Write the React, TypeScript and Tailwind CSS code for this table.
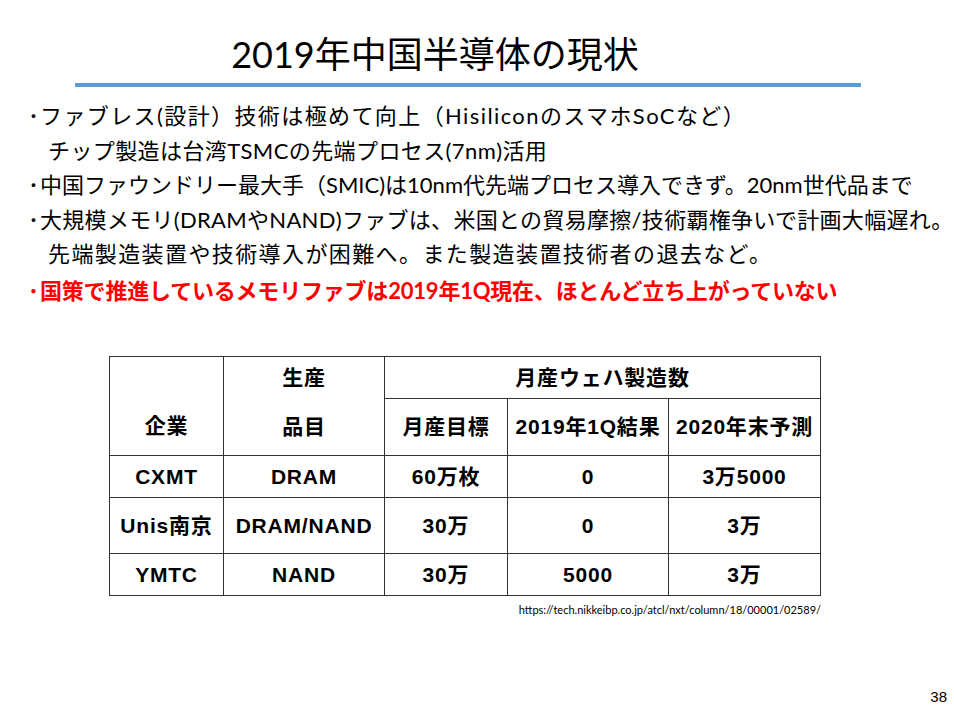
import React from "react";

const bodyFont = { fontFamily: 'Lato, "Noto Sans CJK JP", sans-serif' };
const tableFont = { fontFamily: '"Liberation Sans", "Noto Sans CJK JP", sans-serif' };

function Cell({ children, className = "" }: { children?: React.ReactNode; className?: string }) {
  return (
    <div className={"flex items-center justify-center border-r border-b border-[#333] " + className}>
      {children}
    </div>
  );
}

function Bullet({ children, className = "" }: { children: React.ReactNode; className?: string }) {
  return (
    <div className="flex">
      <span className="w-[12px] shrink-0">･</span>
      <span className={className}>{children}</span>
    </div>
  );
}

export default function App() {
  const rows = [
    ["CXMT", "DRAM", "60万枚", "0", "3万5000", "h-[42px]"],
    ["Unis南京", "DRAM/NAND", "30万", "0", "3万", "h-[56px]"],
    ["YMTC", "NAND", "30万", "5000", "3万", "h-[42px]"],
  ];
  return (
    <div className="w-[954px] h-[714px] bg-white relative overflow-hidden text-black">
      <div className="pt-[31px] flex justify-center">
        <h1 className="text-[36px] leading-[46px] mr-[84px]" style={bodyFont}>
          2019年中国半導体の現状
        </h1>
      </div>
      <div className="ml-[75px] mt-[6px] h-[4px] w-[786px] bg-[#5b9bd5]" />
      <div className="pl-[28px] pt-[12px] text-[22px] leading-[34.5px]" style={bodyFont}>
        <Bullet className="tracking-[1.4px]">ファブレス(設計）技術は極めて向上（HisiliconのスマホSoCなど）</Bullet>
        <div className="pl-[20px] tracking-[0.4px]">チップ製造は台湾TSMCの先端プロセス(7nm)活用</div>
        <Bullet>中国ファウンドリー最大手（SMIC)は10nm代先端プロセス導入できず。20nm世代品まで</Bullet>
        <Bullet className="tracking-[0.3px]">大規模メモリ(DRAMやNAND)ファブは、米国との貿易摩擦/技術覇権争いで計画大幅遅れ。</Bullet>
        <div className="pl-[20px] tracking-[1.4px]">先端製造装置や技術導入が困難へ。また製造装置技術者の退去など。</div>
        <div className="text-[#ff0000] font-bold mt-[2px]">
          <Bullet className="tracking-[-0.2px]">国策で推進しているメモリファブは2019年1Q現在、ほとんど立ち上がっていない</Bullet>
        </div>
      </div>
      <div className="ml-[109px] mt-[48px] w-[712px]">
        <div className="border-l border-t border-[#333] text-[21px] font-bold tracking-[0.8px]" style={tableFont}>
          <div className="grid grid-cols-[114px_161px_123px_161px_152px]">
            <Cell className="row-span-2 pt-[40px]">企業</Cell>
            <div className="row-span-2 flex flex-col items-center border-r border-b border-[#333]">
              <div className="h-[42px] flex items-center">生産</div>
              <div className="h-[56px] flex items-center">品目</div>
            </div>
            <Cell className="col-span-3 h-[42px]">月産ウェハ製造数</Cell>
            <Cell className="h-[57px]">月産目標</Cell>
            <Cell className="h-[57px]">2019年1Q結果</Cell>
            <Cell className="h-[57px]">2020年末予測</Cell>
            {rows.map((r) => (
              <React.Fragment key={r[0]}>
                <Cell className={r[5]}>{r[0]}</Cell>
                <Cell className={r[5]}>{r[1]}</Cell>
                <Cell className={r[5]}>{r[2]}</Cell>
                <Cell className={r[5]}>{r[3]}</Cell>
                <Cell className={r[5]}>{r[4]}</Cell>
              </React.Fragment>
            ))}
          </div>
        </div>
        <div className="text-right text-[11px] mt-[6px]" style={bodyFont}>
          https://tech.nikkeibp.co.jp/atcl/nxt/column/18/00001/02589/
        </div>
      </div>
      <div className="absolute right-[7px] bottom-[6px] text-[15px]" style={tableFont}>38</div>
    </div>
  );
}
